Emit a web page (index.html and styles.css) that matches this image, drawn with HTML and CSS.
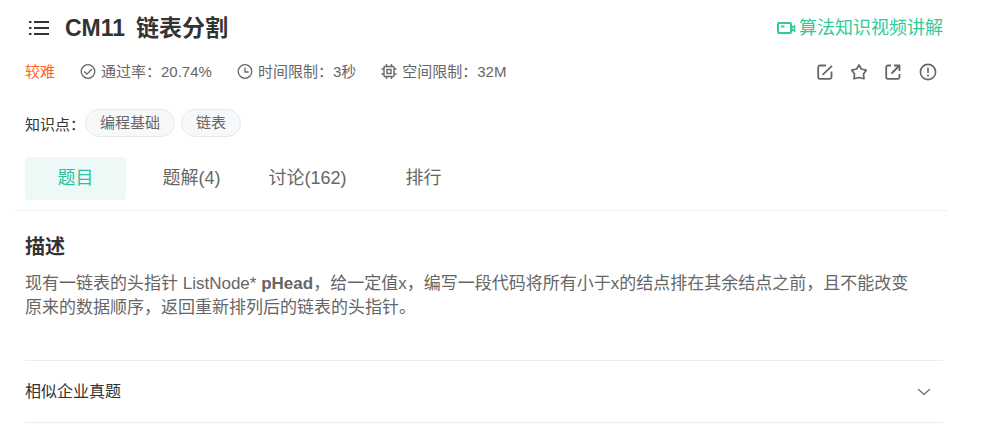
FILE: index.html
```html
<!DOCTYPE html>
<html lang="zh-CN">
<head>
    <meta charset="UTF-8">
    <title>CM11 链表分割</title>
    <link rel="stylesheet" href="styles.css">
</head>
<body>

<div class="page">
    <header class="question-header">
        <div class="title-row">
            <button type="button" class="icon-btn menu-btn" aria-label="题目列表">
                <svg width="20" height="16" viewBox="0 0 20 16" fill="none" stroke="#333" stroke-width="2">
                    <path d="M5 2H20M5 8H20M5 14H20M0 2h2.5M0 8h2.5M0 14h2.5"/>
                </svg>
            </button>
            <h1 class="title"><span>CM11</span><span>链表分割</span></h1>
            <a class="video-link" href="#">
                <svg width="19" height="14" viewBox="0 0 19 14" fill="none" stroke="currentColor" stroke-width="2">
                    <rect x="1" y="2" width="13" height="10" rx="1"/>
                    <path d="M4 5.5h3.5"/>
                    <path d="M15 6l2.5-1v5L15 9z" stroke-width="1.6"/>
                </svg>
                算法知识视频讲解
            </a>
        </div>

        <div class="info-row">
            <span class="level">较难</span>
            <span class="stat">
                <svg width="16" height="16" viewBox="0 0 16 16" fill="none" stroke="currentColor" stroke-width="1.3">
                    <circle cx="8" cy="7.500" r="6.8"/>
                    <path d="M4.2 7.500l2.8 2.7 5-5.2"/>
                </svg>
                通过率：20.74%
            </span>
            <span class="stat">
                <svg width="16" height="16" viewBox="0 0 16 16" fill="none" stroke="currentColor" stroke-width="1.3">
                    <circle cx="8" cy="7.500" r="6.8"/>
                    <path d="M8 3.500v4.5h3.7"/>
                </svg>
                时间限制：3秒
            </span>
            <span class="stat">
                <svg width="16" height="16" viewBox="0 0 16 16" fill="none" stroke="currentColor" stroke-width="1.4">
                    <rect x="3" y="2.500" width="10" height="10" rx="1"/>
                    <rect x="6" y="5.500" width="4" height="4"/>
                    <path d="M5.5 2.500V0M10.5 2.500V0M5.5 15V12.500M10.5 15V12.500M.5 5H3M.5 10H3M13 5h2.5M13 10h2.5"/>
                </svg>
                空间限制：32M
            </span>
            <div class="actions">
                <button type="button" class="icon-btn" aria-label="笔记">
                    <svg width="16" height="16" viewBox="0 0 16 16" fill="none" stroke="currentColor" stroke-width="1.8">
                        <path d="M9 1.5H3A1.8 1.8 0 0 0 1.2 3.3v9.7A1.8 1.8 0 0 0 3 14.8h9.7a1.8 1.8 0 0 0 1.8-1.8V7.5M5.5 10.8L15 1.8"/>
                    </svg>
                </button>
                <button type="button" class="icon-btn" aria-label="收藏">
                    <svg width="16" height="16" viewBox="0 0 16 16" fill="none" stroke="currentColor" stroke-width="1.7" stroke-linejoin="round">
                        <path d="M8 1l2.3 4 4.9 1.2-2.7 3.9.5 4.7-5-1.3-5 1.3.5-4.7L.8 6.2 5.700 5z"/>
                    </svg>
                </button>
                <button type="button" class="icon-btn" aria-label="分享">
                    <svg width="16" height="16" viewBox="0 0 16 16" fill="none" stroke="currentColor" stroke-width="1.8">
                        <path d="M6 1.500H3A1.800 1.800 0 0 0 1.200 3.300v9.700A1.800 1.800 0 0 0 3 14.800h9.700a1.800 1.800 0 0 0 1.800-1.800V10M6.500 9.500l7.500-7.500M9 1.500h5.500v5.500"/>
                    </svg>
                </button>
                <button type="button" class="icon-btn" aria-label="反馈">
                    <svg width="18" height="18" viewBox="0 0 18 18" fill="none" stroke="currentColor" stroke-width="1.6">
                        <circle cx="9" cy="9" r="7.600"/>
                        <path d="M9 4.500v5.500M9 11.500v2"/>
                    </svg>
                </button>
            </div>
        </div>

        <div class="tag-row">
            <span>知识点：</span>
            <a class="tag" href="#">编程基础</a>
            <a class="tag" href="#">链表</a>
        </div>

        <nav class="tabs">
            <a class="tab active" href="#">题目</a>
            <a class="tab" href="#">题解(4)</a>
            <a class="tab" href="#">讨论(162)</a>
            <a class="tab" href="#">排行</a>
        </nav>
    </header>

    <main class="content">
        <h2>描述</h2>
        <p class="description">现有一链表的头指针 ListNode* <b>pHead</b>，给一定值x，编写一段代码将所有小于x的结点排在其余结点之前，且不能改变原来的数据顺序，返回重新排列后的链表的头指针。</p>

        <button type="button" class="collapse">
            相似企业真题
            <svg width="14" height="8" viewBox="0 0 14 8" fill="none" stroke="#666" stroke-width="1.1">
                <path d="M1 1l6 5.500L13 1"/>
            </svg>
        </button>
    </main>
</div>

</body>
</html>
```
FILE: styles.css
```css
* {
    box-sizing: border-box;
}

body {
    margin: 0;
    background-color: #fff;
    font-family: "Liberation Sans", Arial, "Noto Sans CJK SC", sans-serif;
    font-size: 15px;
    line-height: 24px;
    color: #666;
}

a {
    color: inherit;
    text-decoration: none;
}

svg {
    flex: none;
    display: block;
}

.page {
    margin: 0 54px 0 14px;
}

/* Header */
.question-header {
    padding: 12px 5px 10px 11px;
    border-bottom: 1px solid #f0f0f0;
}

.title-row,
.info-row,
.tag-row {
    display: flex;
    align-items: center;
}

.title-row {
    height: 32px;
}

.icon-btn {
    padding: 0;
    border: none;
    background: none;
    color: inherit;
    cursor: pointer;
}

.menu-btn {
    margin: 0 16px 0 4px;
}

.title {
    display: flex;
    gap: 11px;
    margin: 0;
    font-size: 23px;
    line-height: 32px;
    color: #333;
}

.video-link {
    display: flex;
    align-items: center;
    gap: 3px;
    margin-left: auto;
    font-size: 18px;
    color: #32ca99;
}

.info-row {
    margin-top: 16px;
    gap: 25px;
}

.level {
    color: #ff6322;
}

.stat {
    display: flex;
    align-items: center;
    gap: 5px;
}

.actions {
    display: flex;
    align-items: center;
    gap: 18px;
    margin-left: auto;
    padding-right: 6px;
}

.tag-row {
    align-items: flex-end;
    margin-top: 25px;
    color: #333;
}

.tag {
    margin-right: 6px;
    padding: 0 14px;
    border: 1px solid #e6e8eb;
    border-radius: 14px;
    background-color: #f7f8fa;
    line-height: 26px;
    color: #666;
}

.tabs {
    display: flex;
    gap: 15px;
    margin-top: 20px;
}

.tab {
    width: 101px;
    border-radius: 4px;
    font-size: 18px;
    line-height: 43px;
    text-align: center;
}

.tab.active {
    background-color: #edf9f7;
    color: #32bea0;
}

/* Question body */
.content {
    padding: 24px 5px 0 11px;
}

h2 {
    margin: 0 0 13px;
    font-size: 20px;
    line-height: 24px;
    color: #333;
}

.description {
    margin: 0 0 40px;
    padding-right: 24px;
    font-size: 17px;
}

.collapse {
    display: flex;
    align-items: center;
    justify-content: space-between;
    width: 100%;
    padding: 19px 12px 18px 0;
    border: solid #ececf4;
    border-width: 1px 0;
    background: none;
    font-family: inherit;
    font-size: 16px;
    line-height: 24px;
    color: #333;
    cursor: pointer;
}
```
